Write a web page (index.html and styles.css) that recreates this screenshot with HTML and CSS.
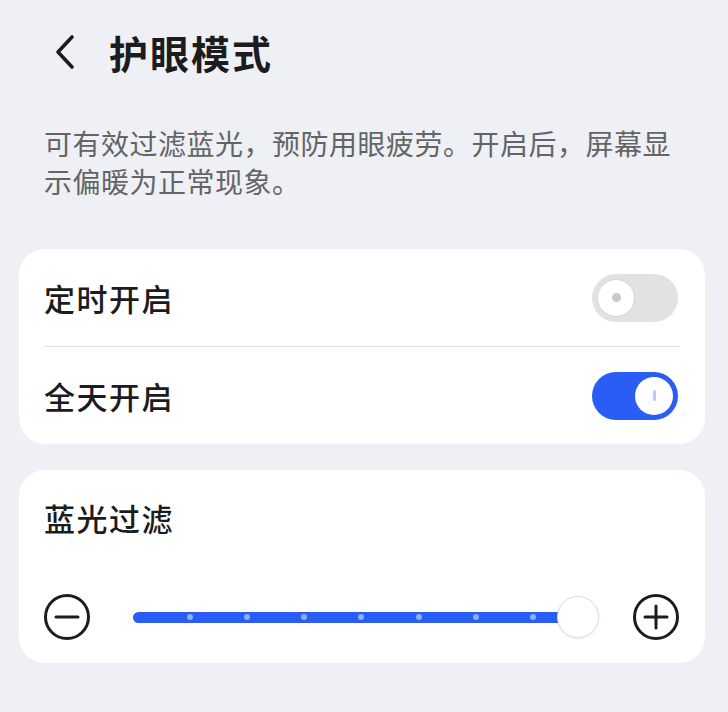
FILE: index.html
```html
<!DOCTYPE html>
<html>
	<head>
		<meta charset="UTF-8">
		<title>护眼模式</title>
		<link rel="stylesheet" href="styles.css">
	</head>
	<body>
		<div class="page">
			<div class="header">
				<span class="back">
					<svg width="28" height="36" viewBox="0 0 28 36"><path d="M20 3 L6 18 L20 33" fill="none" stroke="#1c1c1c" stroke-width="3.6" stroke-linecap="round" stroke-linejoin="round"/></svg>
				</span>
				<h1 class="title">护眼模式</h1>
			</div>
			<p class="desc">可有效过滤蓝光，预防用眼疲劳。开启后，屏幕显示偏暖为正常现象。</p>
			<div class="card">
				<div class="row">
					<span class="label">定时开启</span>
					<span class="switch"><span class="knob"><i class="dot"></i></span></span>
				</div>
				<div class="divider"></div>
				<div class="row">
					<span class="label">全天开启</span>
					<span class="switch on"><span class="knob"><i class="bar"></i></span></span>
				</div>
			</div>
			<div class="card filter">
				<div class="filter-title">蓝光过滤</div>
				<div class="slider-row">
					<svg class="step" width="48" height="48" viewBox="0 0 48 48"><circle cx="24" cy="24" r="21.5" fill="none" stroke="#1c1c1c" stroke-width="3"/><path d="M13 24 H35" stroke="#1c1c1c" stroke-width="3" stroke-linecap="round"/></svg>
					<div class="slider">
						<div class="track">
							<i></i><i></i><i></i><i></i><i></i><i></i><i></i>
						</div>
						<span class="thumb"></span>
					</div>
					<svg class="step" width="48" height="48" viewBox="0 0 48 48"><circle cx="24" cy="24" r="21.5" fill="none" stroke="#1c1c1c" stroke-width="3"/><path d="M13 24 H35 M24 13 V35" stroke="#1c1c1c" stroke-width="3" stroke-linecap="round"/></svg>
				</div>
			</div>
		</div>
	</body>
</html>
```

FILE: styles.css
```css
*{margin:0;padding:0;box-sizing:border-box;}
body{background:#eef0f5;font-family:"Noto Sans CJK SC","Noto Sans",sans-serif;color:#1c1c1c;}
.page{width:728px;min-height:712px;}
.header{height:104px;display:flex;align-items:center;padding-left:52px;}
.back{display:flex;width:57px;}
.title{font-size:39px;font-weight:700;letter-spacing:2px;}
.desc{padding:20px 44px 0 44px;font-size:28px;line-height:38px;color:#646464;letter-spacing:0.5px;}
.card{margin:49px 23px 0 19px;background:#fff;border-radius:26px;padding:0 25px;}
.row{height:97px;display:flex;align-items:center;justify-content:space-between;}
.label{font-size:31px;font-weight:500;letter-spacing:1.5px;}
.divider{height:1px;background:#dedede;}
.switch{position:relative;width:86px;height:48px;border-radius:24px;background:#e2e2e2;margin-right:2px;}
.knob{position:absolute;top:5px;left:5px;width:38px;height:38px;border-radius:50%;background:#fff;border:1.5px solid #d6d6d6;display:flex;align-items:center;justify-content:center;}
.dot{width:9px;height:9px;border-radius:50%;background:#c9c9c9;}
.switch.on{background:#2a5df5;}
.switch.on .knob{left:auto;right:5px;border:none;}
.bar{width:3px;height:11px;border-radius:2px;background:#b8cbf8;}
.card.filter{margin-top:26px;height:193px;}
.filter-title{height:98px;display:flex;align-items:center;font-size:31px;font-weight:500;letter-spacing:1.5px;padding-bottom:4px;}
.slider-row{display:flex;align-items:center;height:50px;margin-top:24px;}
.step{flex:none;margin-left:-1px;}
.slider{position:relative;flex:1;height:44px;margin:0 34px 0 42px;display:flex;align-items:center;}
.track{flex:1;height:11px;margin-right:21px;border-radius:6px;background:#2a5df5;display:flex;align-items:center;justify-content:space-between;padding:0 42px 0 54px;}
.track i{width:6px;height:6px;border-radius:50%;background:#8eaef8;}
.thumb{position:absolute;right:0;top:1px;width:42px;height:42px;border-radius:50%;background:#fff;border:1.5px solid #dcdcdc;box-shadow:0 1px 3px rgba(0,0,0,0.08);}
```
